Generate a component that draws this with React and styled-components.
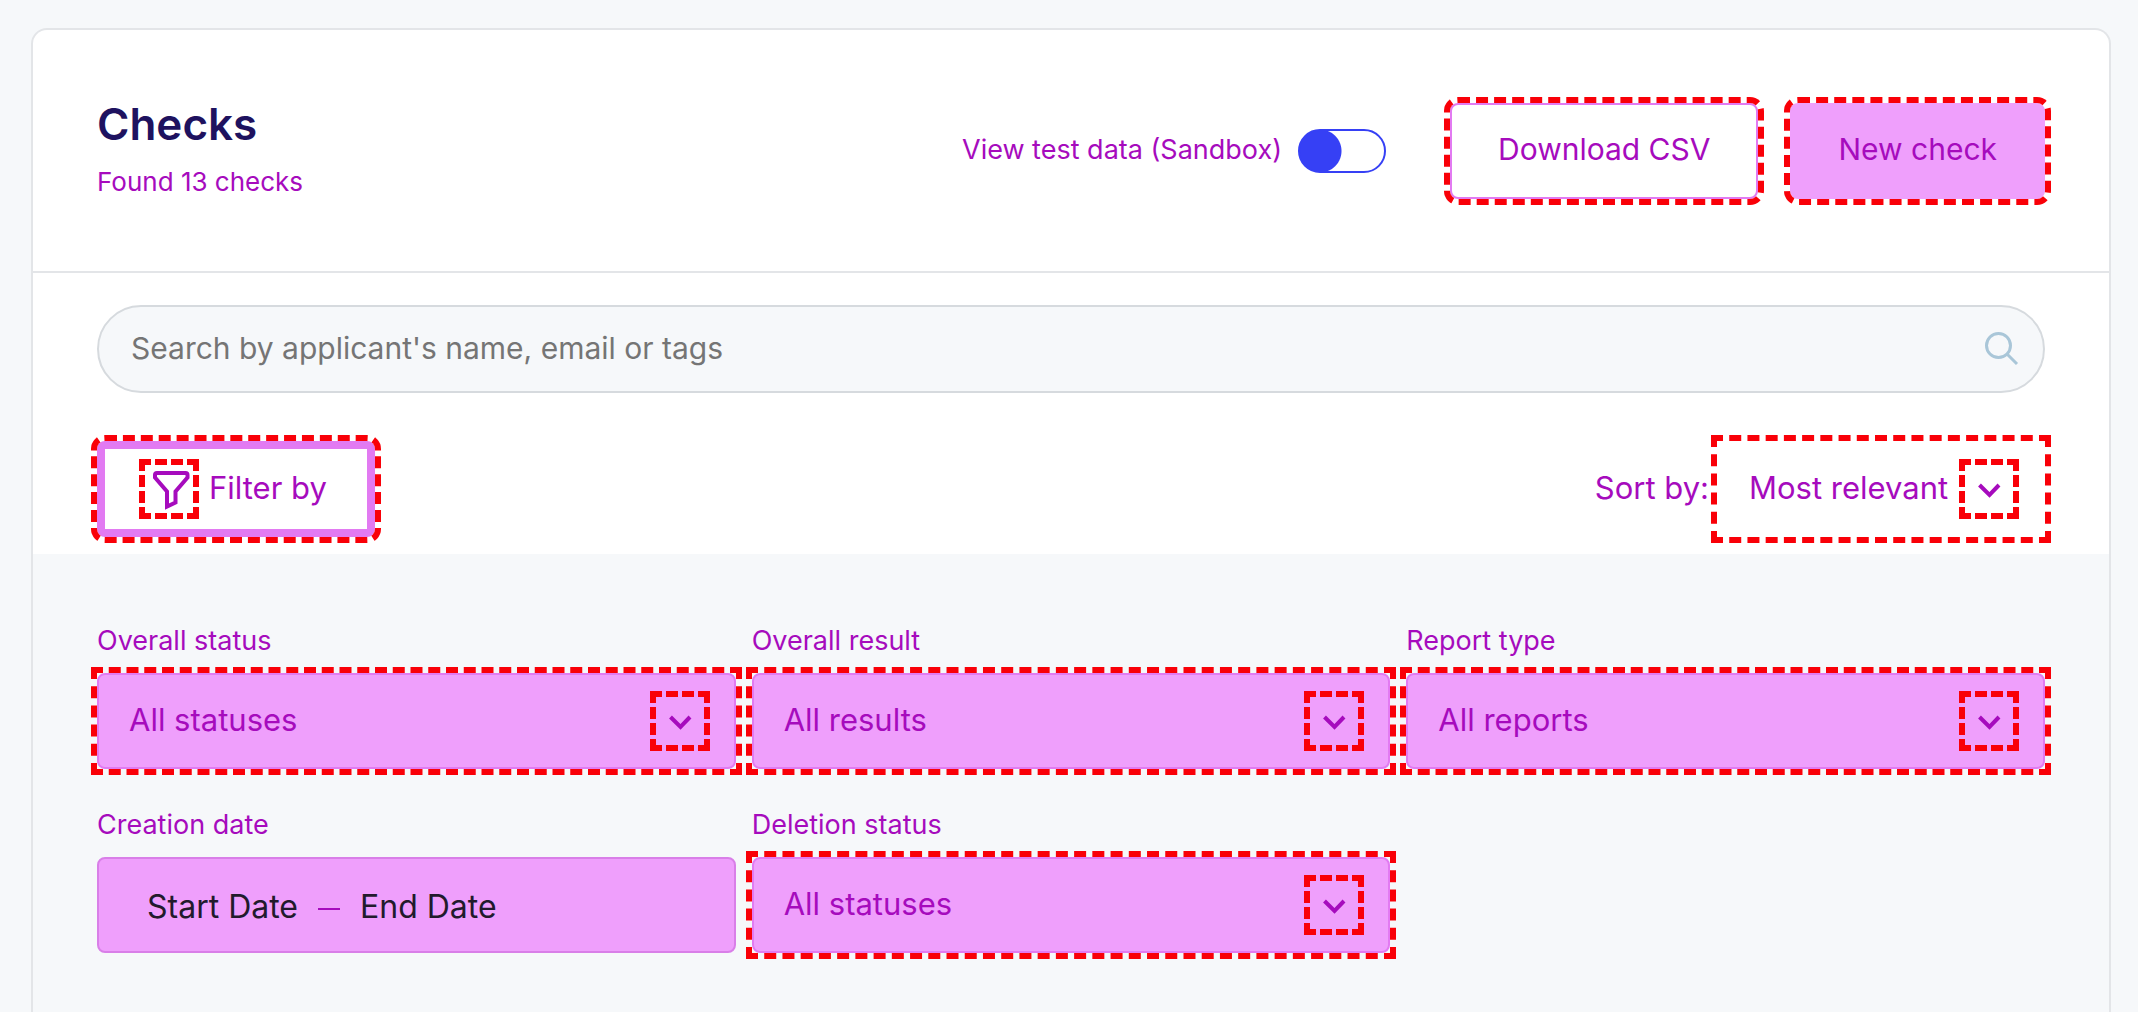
import styled, { createGlobalStyle } from 'styled-components';

const GlobalStyle = createGlobalStyle`
*{
    box-sizing: border-box;
}

body{
    margin: 0;
    background-color: #f6f8fa;
    color: #a60bbd;
    font-family: Inter, "Liberation Sans", sans-serif;
    font-size: 30px;
    line-height: 40px;
}
`;

const App = () => {
    return(
        <>
            <GlobalStyle />
            <Card>
                <Header>
                    <div>
                        <Heading>Checks</Heading>
                        <Found>Found 13 checks</Found>
                    </div>
                    <Actions>
                        <ToggleLabel>
                            <LabelText>View test data (Sandbox)</LabelText>
                            <Toggle type="checkbox" />
                        </ToggleLabel>
                        <ButtonGroup>
                            <Button type="button">Download CSV</Button>
                            <Button type="button" $filled>New check</Button>
                        </ButtonGroup>
                    </Actions>
                </Header>

                <Toolbar>
                    <SearchBox>
                        <SearchInput type="search" aria-label="Search checks" placeholder="Search by applicant's name, email or tags" />
                        <SearchIcon />
                    </SearchBox>
                    <ToolbarRow>
                        <FilterButton type="button">
                            <FilterIcon />
                            <LabelText>Filter by</LabelText>
                        </FilterButton>
                        <SortBy>
                            <SortLabel htmlFor="sort">Sort by:</SortLabel>
                            <Dropdown id="sort" text="Most relevant" plain />
                        </SortBy>
                    </ToolbarRow>
                </Toolbar>

                <Filters>
                    <Filter id="status" label="Overall status" text="All statuses" />
                    <Filter id="result" label="Overall result" text="All results" />
                    <Filter id="report" label="Report type" text="All reports" />
                    <Field>
                        <FieldLabel htmlFor="start">Creation date</FieldLabel>
                        <DateRange>
                            <DateInput id="start" placeholder="Start Date" />
                            <Dash />
                            <DateInput aria-label="End date" placeholder="End Date" />
                        </DateRange>
                    </Field>
                    <Filter id="deletion" label="Deletion status" text="All statuses" />
                </Filters>
            </Card>
        </>
    )
}

const Filter = ({id, label, text}) => (
    <Field>
        <FieldLabel htmlFor={id}>{label}</FieldLabel>
        <Dropdown id={id} text={text} />
    </Field>
)

const Dropdown = ({id, text, plain}) => (
    <DropdownBox>
        <Select id={id} $plain={plain}>
            <option>{text}</option>
        </Select>
        <Chevron viewBox="0 0 48 48" aria-hidden="true">
            <path d="M14.5 20 L24.5 30 L34 20" />
        </Chevron>
    </DropdownBox>
)

const FilterIcon = () => (
    <OutlinedIcon viewBox="0 0 48 48" aria-hidden="true">
        <path d="M12 8 H40.5 Q42.5 8 42.5 10 V12.5 L30.5 26.5 V37.5 L22 41.5 V26.5 L10 12.5 V10 Q10 8 12 8 Z" />
    </OutlinedIcon>
)

const SearchIcon = () => (
    <Magnifier viewBox="0 0 34 34" aria-hidden="true">
        <circle cx="13.5" cy="13.5" r="12" />
        <path d="M22 22 L32 32" />
    </Magnifier>
)


const Card = styled.main`
margin: 28px 27px 0 31px;
min-height: calc(100vh - 28px);
border: 2px solid #e3e5e8;
border-bottom: 0;
border-radius: 16px 16px 0 0;
background-color: #fff;
display: flex;
flex-direction: column;
`;

const Header = styled.header`
display: flex;
justify-content: space-between;
align-items: flex-start;
padding: 62px 64px 71px;
border-bottom: 2px solid #e3e5e8;
`;

const Heading = styled.h1`
margin: 0;
color: #1e125f;
font-size: 44px;
line-height: 64px;
font-weight: 600;
`;

const Found = styled.p`
margin: 0;
padding-top: 8px;
font-size: 26px;
line-height: 36px;
`;

const Actions = styled.div`
display: flex;
align-items: center;
gap: 64px;
padding-top: 11px;
`;

const ToggleLabel = styled.label`
display: flex;
align-items: center;
gap: 16px;
font-size: 27px;
`;

const LabelText = styled.span`
padding-bottom: 3px;
`;

const Toggle = styled.input`
appearance: none;
margin: 0;
width: 88px;
height: 44px;
border: 2px solid #3640f5;
border-radius: 22px;
background: radial-gradient(circle at 22px 22px, #3640f5 21px, transparent 22px) border-box;
`;

const ButtonGroup = styled.div`
display: flex;
gap: 32px;
`;

const Button = styled.button`
height: 96px;
padding: 0 46px 4px;
border: 2px solid ${props => props.$filled ? '#ef9ffc' : '#e27af2'};
border-radius: 8px;
outline: 6px dashed #f90008;
background-color: ${props => props.$filled ? '#ef9ffc' : '#fff'};
color: inherit;
font: inherit;
`;

const Toolbar = styled.section`
padding: 32px 64px 17px;
`;

const SearchBox = styled.div`
display: flex;
align-items: center;
height: 88px;
padding: 0 24px 0 32px;
border: 2px solid #d6dade;
border-radius: 44px;
background-color: #f6f8fa;
`;

const SearchInput = styled.input`
flex: 1;
padding: 0 0 2px;
border: 0;
outline: 0;
background: none;
font: inherit;

&::placeholder{
    color: #757575;
}
`;

const Magnifier = styled.svg`
width: 34px;
height: 34px;
fill: none;
stroke: #a9c6d8;
stroke-width: 3;
`;

const ToolbarRow = styled.div`
display: flex;
justify-content: space-between;
padding-top: 48px;
font-size: 31px;
`;

const FilterButton = styled(Button)`
display: flex;
align-items: center;
gap: 16px;
padding: 0 40px;
border: 8px solid #e27af2;
`;

const OutlinedIcon = styled.svg`
width: 48px;
height: 48px;
outline: 6px dashed #f90008;
fill: none;
stroke: #a60bbd;
stroke-width: 4;
`;

const SortBy = styled.div`
display: flex;
align-items: center;
gap: 8px;
`;

const SortLabel = styled.label`
padding-bottom: 3px;
`;

const DropdownBox = styled.div`
display: grid;
align-items: center;
outline: 6px dashed #f90008;
`;

const Select = styled.select`
grid-area: 1 / 1;
appearance: none;
width: 100%;
height: 96px;
padding: 0 94px 3px 30px;
border: 2px solid ${props => props.$plain ? 'transparent' : '#e27af2'};
border-radius: 8px;
background-color: ${props => props.$plain ? 'transparent' : '#ef9ffc'};
color: inherit;
font: inherit;
`;

const Chevron = styled(OutlinedIcon)`
grid-area: 1 / 1;
justify-self: end;
margin-right: 32px;
pointer-events: none;
`;

const Filters = styled.section`
flex: 1;
display: grid;
grid-template-columns: repeat(3, 1fr);
align-content: start;
gap: 36px 16px;
padding: 67px 64px 56px;
background-color: #f6f8fa;
font-size: 31px;
`;

const Field = styled.div`
display: flex;
flex-direction: column;
gap: 12px;
`;

const FieldLabel = styled.label`
font-size: 27px;
line-height: 40px;
`;

const DateRange = styled.div`
display: flex;
align-items: center;
height: 96px;
padding: 4px 48px 0;
border: 2px solid #d97fe8;
border-radius: 8px;
background-color: #ef9ffc;
font-size: 32px;
`;

const DateInput = styled.input`
field-sizing: content;
padding: 0;
border: 0;
outline: 0;
background: none;
font: inherit;

&::placeholder{
    color: #221a2c;
}
`;

const Dash = styled.span`
width: 22px;
height: 2px;
margin: 4px 20px 0;
background-color: #a60bbd;
`;

export default App
